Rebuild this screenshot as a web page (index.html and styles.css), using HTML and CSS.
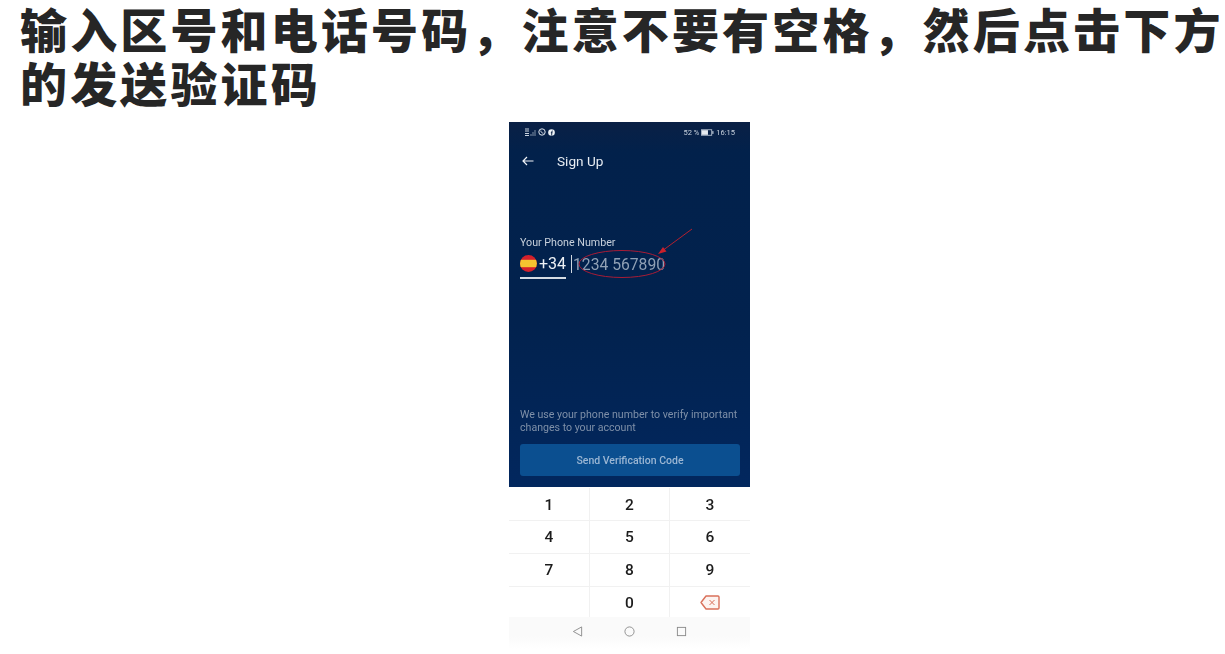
FILE: index.html
```html
<!DOCTYPE html>
<html lang="zh">
<head>
<meta charset="utf-8">
<title>发送验证码</title>
<link rel="stylesheet" href="styles.css">
</head>
<body>
<h1 class="title">输入区号和电话号码&#65292;注意不要有空格&#65292;然后点击下方<br>的发送验证码</h1>
<div class="phone">
  <section class="screen">
    <div class="status">
      <div class="status-left">
        <svg class="sig" viewBox="0 0 11 8"><path d="M0 1h4M0 3h4M0 5.500h4M0 7.500h4" stroke="#c9d3df" fill="none"/><path d="M6 8V6M8 8V4M10 8V2" stroke="#7f8fa6" fill="none"/></svg>
        <svg class="wa" viewBox="0 0 8 8"><circle cx="4" cy="4" r="3.200" fill="none" stroke="#dfe6ee" stroke-width="1"/><path d="M2.800 2.600c0 1.400 1.200 2.600 2.600 2.600" fill="none" stroke="#dfe6ee"/></svg>
        <svg class="fb" viewBox="0 0 8 8"><circle cx="4" cy="4" r="3.800" fill="#eef2f6"/><path d="M4.200 7.500V3.300c0-.8.400-1 1.200-1M3.200 4.300h2" stroke="#0b2146" fill="none"/></svg>
      </div>
      <div class="status-right">
        <span>52 %</span>
        <svg class="batt" viewBox="0 0 14 7"><rect x=".5" y=".5" width="11" height="6" fill="none" stroke="#aab7c8"/><rect x="1" y="1" width="6.500" height="5" fill="#e6ebf1"/><rect x="12" y="2" width="1.500" height="3" fill="#aab7c8"/></svg>
        <span>16:15</span>
      </div>
    </div>
    <header class="appbar">
      <svg class="back" viewBox="0 0 12 10"><path d="M11.500 5H1M5 1 1 5l4 4" fill="none" stroke="#f1f4f8" stroke-width="1.200"/></svg>
      <span class="appbar-title">Sign Up</span>
    </header>
    <div class="field">
      <label class="field-label">Your Phone Number</label>
      <div class="field-row">
        <div class="code">
          <svg class="flag" viewBox="0 0 16 16"><defs><clipPath id="c"><circle cx="8" cy="8" r="8"/></clipPath></defs><g clip-path="url(#c)"><rect width="16" height="16" fill="#d4202c"/><rect y="4.500" width="16" height="7" fill="#f4c430"/></g></svg>
          <span>+34</span>
        </div>
        <span class="caret"></span>
        <span class="placeholder">1234 567890</span>
      </div>
      <svg class="mark" viewBox="0 0 140 60"><ellipse cx="60" cy="38" rx="43" ry="13.500" fill="none" stroke="#a81c36" stroke-width="1"/><path d="M130 3 100 25" stroke="#b3202f" fill="none"/><path d="M96 28l8.500-2.500-3.500-4.500z" fill="#c9202c"/></svg>
    </div>
    <div class="foot">
      <p class="note">We use your phone number to verify important changes to your account</p>
      <button class="send">Send Verification Code</button>
    </div>
  </section>
  <section class="keypad">
    <div class="key">1</div><div class="key">2</div><div class="key">3</div>
    <div class="key">4</div><div class="key">5</div><div class="key">6</div>
    <div class="key">7</div><div class="key">8</div><div class="key">9</div>
    <div class="key"></div><div class="key">0</div>
    <div class="key"><svg class="del" viewBox="0 0 20 15"><path d="M6 1h12a1 1 0 0 1 1 1v11a1 1 0 0 1-1 1H6L1 7.500z" fill="#fdf3f0" stroke="#d9705a" stroke-width="1.400" stroke-linejoin="round"/><path d="M9.500 5l5 5M14.500 5l-5 5" stroke="#d9705a" fill="none"/></svg></div>
  </section>
  <nav class="navbar">
    <svg class="nav-i" viewBox="0 0 12 12"><path d="M10.500 1v10L1.500 6z" fill="none" stroke="#8a8a8a"/></svg>
    <svg class="nav-i" viewBox="0 0 12 12"><circle cx="6" cy="6" r="5" fill="none" stroke="#8a8a8a"/></svg>
    <svg class="nav-i" viewBox="0 0 12 12"><rect x="1.500" y="1.500" width="9" height="9" fill="none" stroke="#8a8a8a"/></svg>
  </nav>
</div>
</body>
</html>
```
FILE: styles.css
```css
* { box-sizing: border-box; }
html, body { margin: 0; padding: 0; background: #fff; }
body { height: 654px; font-family: Roboto, "Liberation Sans", sans-serif; }

.title {
  margin: 0;
  padding: 1px 0 0 20px;
  font: 900 47px/54px "Noto Sans CJK SC", sans-serif;
  letter-spacing: 3.150px;
  white-space: nowrap;
  color: #262626;
}

.phone { width: 241px; margin: 13px 0 0 509px; }
.screen {
  height: 365px;
  display: flex;
  flex-direction: column;
  background: linear-gradient(#0a2045 0, #02214b 30px, #02224e 200px, #02275e 100%);
  color: #fff;
  filter: blur(.5px);
}
.status { height: 20px; display: flex; justify-content: space-between; align-items: center; padding: 0 15px 0 16px; }
.status-left { display: flex; align-items: center; gap: 2px; }
.status-right { display: flex; align-items: center; gap: 2px; font-size: 7.500px; color: #c9d3df; }
.sig { width: 11px; height: 8px; }
.wa { width: 8px; height: 8px; }
.fb { width: 7px; height: 7px; }
.batt { width: 13px; height: 7px; }

.appbar { height: 38px; display: flex; align-items: center; padding: 0 0 0 13px; }
.back { width: 12px; height: 10px; }
.appbar-title { margin-left: 23px; font-size: 13.600px; color: #e8edf3; }

.field { position: relative; padding: 56px 0 0 11px; }
.field-label { display: block; font-size: 10.700px; line-height: 13px; color: #c8d1dc; }
.field-row { display: flex; align-items: center; height: 22px; margin-top: 4px; }
.code { align-self: flex-start; width: 46px; height: 26px; padding-bottom: 4px; display: flex; align-items: center; gap: 2px; font-size: 16px; color: #eef2f6; border-bottom: 2px solid #d5dbe3; }
.flag { width: 17px; height: 17px; }
.caret { width: 1px; height: 18px; margin-left: 5px; background: #cfd6df; }
.placeholder { margin-left: 1px; font-size: 15.700px; color: #8fa0b5; }
.mark { position: absolute; left: 53px; top: 46px; width: 140px; height: 60px; }

.foot { margin-top: auto; padding: 0 10px 11px 11px; }
.note { margin: 0 0 10px; font-size: 10.600px; line-height: 13px; color: #7f90a8; }
.send {
  display: block;
  width: 100%;
  height: 32px;
  border: 0;
  border-radius: 3px;
  background: #0b4f90;
  color: #9bb6d3;
  font: 500 10.500px Roboto, sans-serif;
}

.keypad { display: grid; grid-template-columns: 81px 80px 80px; grid-auto-rows: 33px; padding-top: 1px; background: #fff; filter: blur(.4px); }
.key {
  display: flex;
  align-items: center;
  justify-content: center;
  font-size: 15.500px;
  font-weight: 500;
  color: #1c1c1c;
  border-right: 1px solid #f1f1f1;
  border-bottom: 1px solid #f1f1f1;
}
.key:nth-child(3n) { border-right: 0; }
.key:nth-child(-n+3) { padding-top: 1px; }
.key:nth-last-child(-n+3) { border-bottom: 0; padding-bottom: 2px; }
.del { width: 20px; height: 15px; }

.navbar { height: 32px; margin-top: -3px; padding-bottom: 3px; position: relative; display: flex; justify-content: center; align-items: center; gap: 41px; background: linear-gradient(#fafafa 60%, #fff); }
.nav-i { width: 11px; height: 11px; }
```
